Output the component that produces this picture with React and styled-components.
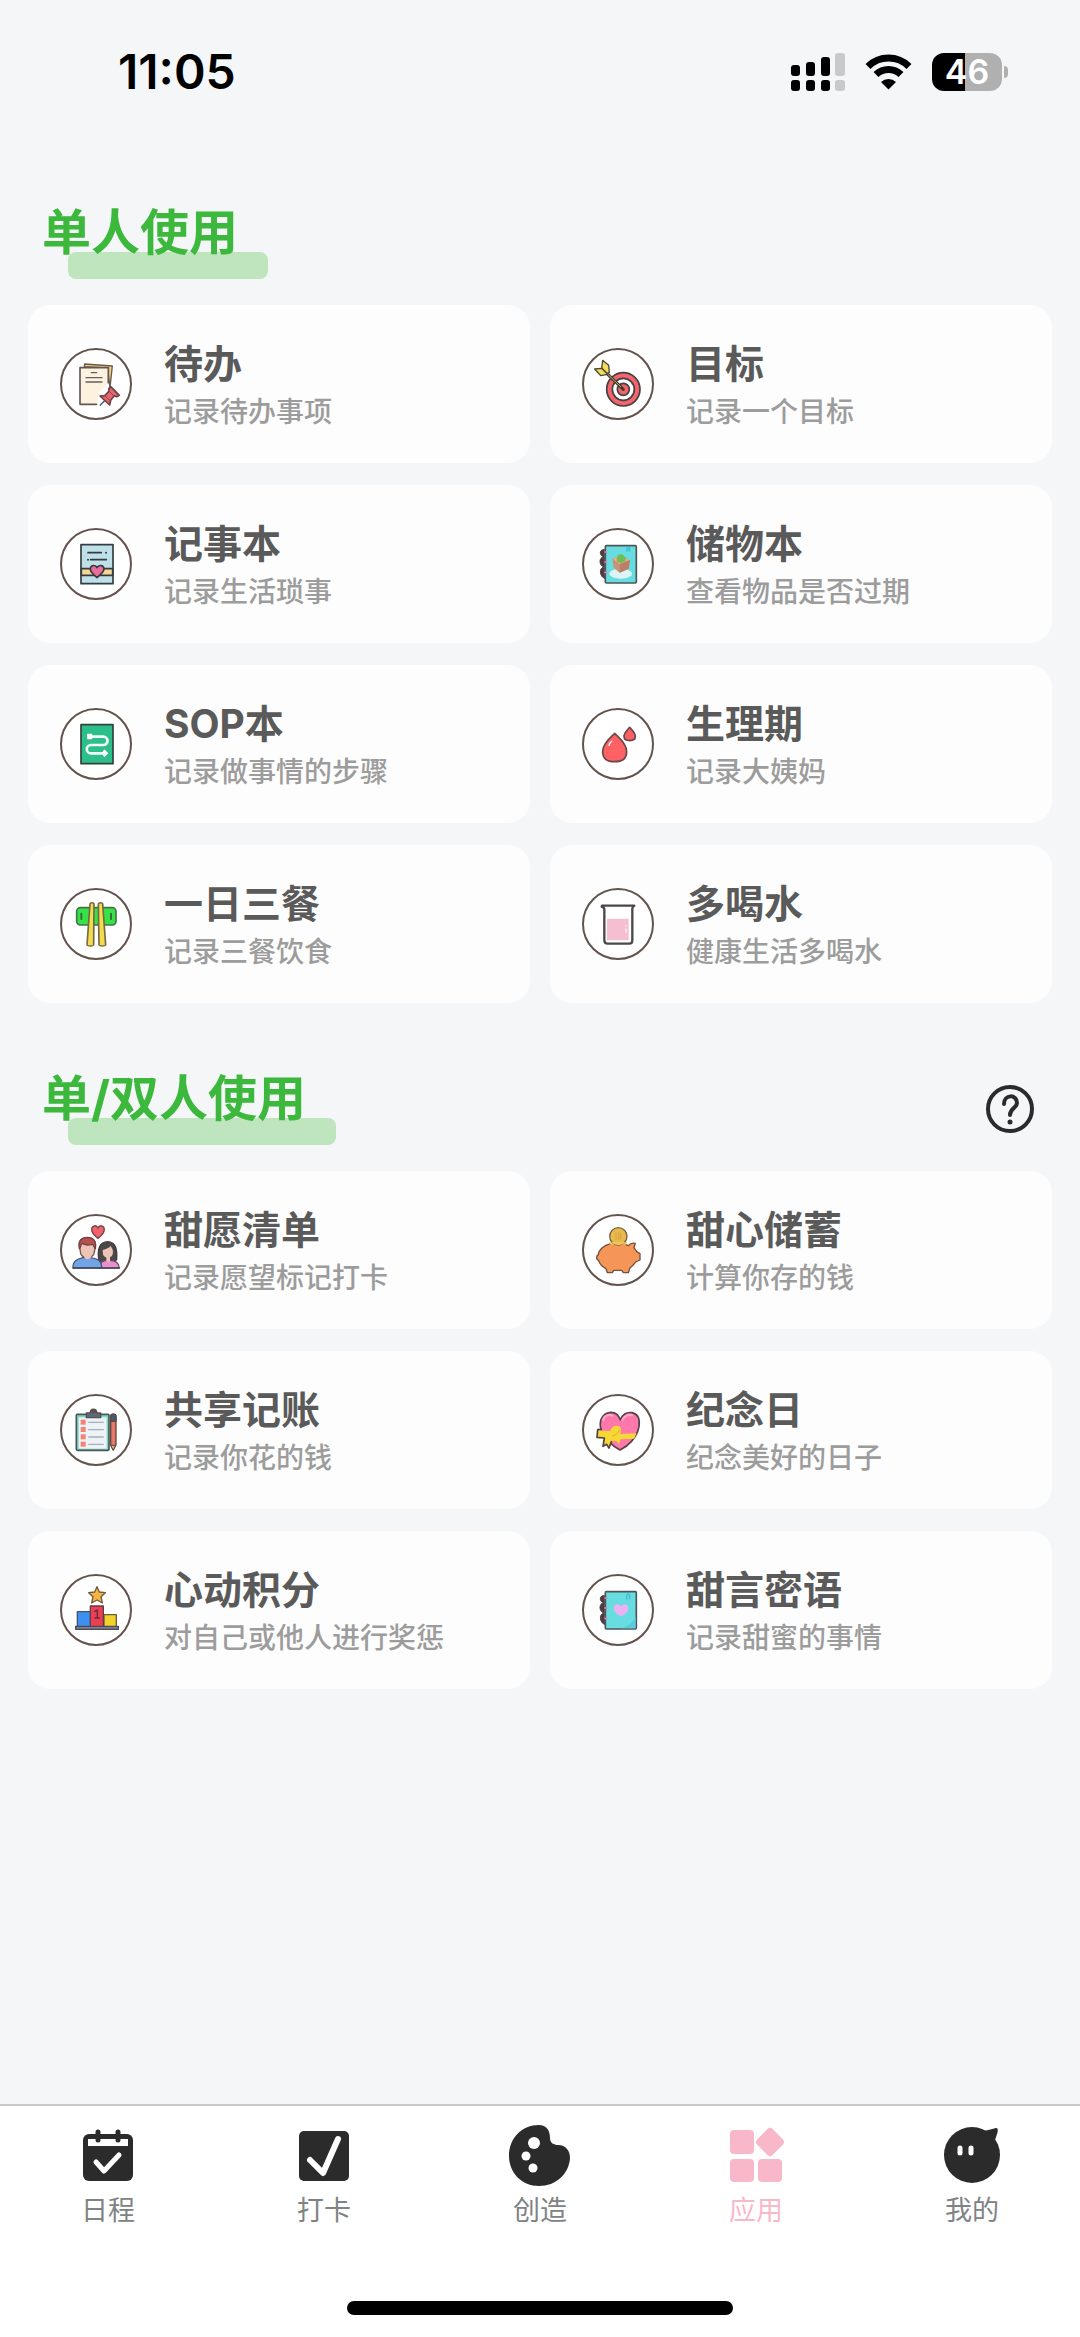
import React from "react";
import styled, { createGlobalStyle } from "styled-components";

const GlobalStyle = createGlobalStyle`
  * { box-sizing: border-box; }
  body {
    margin: 0;
    background: #f4f6f8;
    font-family: Inter, "Noto Sans CJK SC", sans-serif;
  }
`;

const Page = styled.div`
  display: flex;
  flex-direction: column;
  min-height: 100vh;
`;

const StatusBar = styled.header`
  display: flex;
  align-items: center;
  justify-content: space-between;
  height: 144px;
  padding: 0 72px 0 118px;
`;

const Clock = styled.time`
  font-size: 48px;
  font-weight: 600;
  line-height: 56px;
  color: #000;
`;

const StatusIcons = styled.div`
  display: flex;
  align-items: center;
  gap: 20px;
`;

const BatteryWrap = styled.div`
  display: flex;
  align-items: center;
  gap: 2px;
`;

const BatteryBody = styled.div`
  width: 70px;
  height: 38px;
  border-radius: 12px;
  background: linear-gradient(to right, #000 47%, #b0b0b1 47%);
  color: #fff;
  font-size: 34px;
  font-weight: 600;
  line-height: 38px;
  text-align: center;
`;

const BatteryNub = styled.div`
  width: 4px;
  height: 12px;
  border-radius: 0 6px 6px 0;
  background: #b0b0b1;
`;

const Main = styled.main`
  flex: 1;
  display: flex;
  flex-direction: column;
  gap: 66px;
  padding: 59px 28px;
`;

const SectionHeader = styled.div`
  display: flex;
  align-items: center;
  justify-content: space-between;
  height: 80px;
  margin-bottom: 22px;
  padding: 0 18px 0 14px;
`;

const SectionTitle = styled.h2`
  position: relative;
  isolation: isolate;
  align-self: flex-start;
  margin: 0;
  font-size: 49px;
  font-weight: 700;
  line-height: 60px;
  color: #3cb93c;

  &::after {
    content: "";
    position: absolute;
    z-index: -1;
    left: 26px;
    right: -30px;
    top: 49px;
    height: 27px;
    border-radius: 8px;
    background: #bee5be;
  }
`;

const HelpButton = styled.button`
  display: flex;
  padding: 0;
  border: 0;
  background: none;
  cursor: pointer;
`;

const CardGrid = styled.div`
  display: grid;
  grid-template-columns: 1fr 1fr;
  gap: 22px 20px;
`;

const Card = styled.a`
  display: flex;
  align-items: center;
  gap: 32px;
  height: 158px;
  padding: 0 32px;
  border-radius: 22px;
  background: #fdfdfd;
  text-decoration: none;
`;

const IconRing = styled.span`
  display: flex;
  flex: none;
  width: 72px;
  height: 72px;
  border: 2px solid #62534d;
  border-radius: 50%;
  background: #fff;
`;

const CardArt = styled.svg`
  flex: none;
  width: 72px;
  height: 72px;
  margin: -2px;
  stroke-linejoin: round;
  stroke-linecap: round;
`;

const CardText = styled.span`
  display: flex;
  flex-direction: column;
`;

const CardTitle = styled.strong`
  font-size: 39px;
  font-weight: 700;
  line-height: 56px;
  color: #5a5a5a;
`;

const CardNote = styled.span`
  font-size: 28px;
  font-weight: 500;
  line-height: 40px;
  color: #9c9c9c;
`;

const TabBar = styled.nav`
  padding: 18px 0 22px;
  border-top: 2px solid #c6c8c9;
  background: #fff;
`;

const TabList = styled.div`
  display: grid;
  grid-template-columns: repeat(5, 1fr);
`;

const Tab = styled.a`
  display: flex;
  flex-direction: column;
  align-items: center;
  font-size: 27px;
  line-height: 46px;
  text-decoration: none;
  color: ${(p) => (p.$active ? "#f9b8c9" : "#808384")};
`;

const HomeIndicator = styled.div`
  width: 386px;
  max-width: 60%;
  height: 14px;
  margin: 67px auto 0;
  border-radius: 7px;
  background: #000;
`;

const TodoArt = () => (
  <>
    <path d="M74 48 157 54 150 118 142 60 73 56Z" fill="#f3cf7e" stroke="#6a5a4c" strokeWidth="4" />
    <path d="M110 169H60V59H145V104L118 134Z" fill="#fdf1df" />
    <path d="M110 169H60V59H145V104" fill="none" stroke="#5f5857" strokeWidth="5" />
    <path d="M94 74H110M78 89H126M78 102H126" stroke="#66605f" strokeWidth="4" />
    <path d="M133 159 121 171" stroke="#5a5f7c" strokeWidth="5" />
    <path d="M152 116 178 142 170 146 163 143 152 157 149 171 120 144 134 143 146 131 147 121Z" fill="#e5666b" stroke="#6b4347" strokeWidth="5" />
    <path d="M134 143 150 158M148 130 162 144" stroke="#9c444c" strokeWidth="3" />
  </>
);

const TargetArt = () => (
  <>
    <circle cx="124" cy="124" r="50" fill="#f2656b" stroke="#454044" strokeWidth="5" />
    <circle cx="124" cy="124" r="33" fill="#fff" stroke="#454044" strokeWidth="5" />
    <circle cx="124" cy="124" r="18" fill="#f2656b" stroke="#454044" strokeWidth="5" />
    <path d="M62 64 124 124" stroke="#3f3b34" strokeWidth="9" />
    <path d="M70 72 116 116" stroke="#c9ab50" strokeWidth="3" />
    <path d="M59 61 62 37 80 52 82 74 74 76Z" fill="#f5dc57" stroke="#4a4638" strokeWidth="4" />
    <path d="M59 61 38 63 56 83 76 79 74 76Z" fill="#f5dc57" stroke="#4a4638" strokeWidth="4" />
  </>
);

const NotesArt = () => (
  <>
    <rect x="63" y="50" width="96" height="117" fill="#bfe0e8" stroke="#333c40" strokeWidth="5" />
    <rect x="64" y="122" width="94" height="20" fill="#f7d795" stroke="#333c40" strokeWidth="5" />
    <path d="M84 74H124M92 95H139" stroke="#333c40" strokeWidth="5" />
    <circle cx="138" cy="74" r="3" fill="#333c40" />
    <circle cx="84" cy="95" r="3" fill="#333c40" />
    <path d="M111 149C96 137 90 130 91 122C93 110 107 110 111 119C115 110 130 110 132 122C133 130 126 137 111 149Z" fill="#ea6c9b" stroke="#333c40" strokeWidth="5" />
  </>
);

const NotebookShell = ({ children }) => (
  <>
    <path d="M67 65C52 62 50 84 66 86C50 88 50 112 66 117C50 120 52 146 69 152Z" fill="#4d3d40" stroke="#4d3d40" strokeWidth="3" />
    <rect x="70" y="53" width="93" height="112" rx="3" fill="#67dde1" stroke="#4d5557" strokeWidth="5" />
    <path d="M69 72H75M69 102H75M69 133H75" stroke="#e783bd" strokeWidth="5" />
    {children}
  </>
);

const StorageArt = () => (
  <NotebookShell>
    <ellipse cx="116" cy="137" rx="34" ry="15" fill="#dcf4f5" />
    <path d="M91 92 113 84 144 96 140 122 113 134 95 119Z" fill="#c99277" />
    <path d="M91 92 114 108 144 96 113 84Z" fill="#e3ae8e" />
    <path d="M114 108 113 134 140 122 144 96Z" fill="#b98067" />
    <path d="M104 92 108 80 120 78 132 90 129 101 115 105 106 101Z" fill="#6fbd54" />
    <path d="M133 56H145V73L139 68 133 73Z" fill="#43c4d7" />
  </NotebookShell>
);

const WhisperArt = () => (
  <NotebookShell>
    <path d="M118 163C138 157 152 145 161 129V163Z" fill="#58cbdc" />
    <path d="M134 75V65C136 58 143 58 143 66V75" fill="none" stroke="#43bdd0" strokeWidth="4" />
    <path d="M117 126C101 120 94 110 95 100C97 90 111 89 117 97C124 89 138 90 139 101C139 113 130 121 117 126Z" fill="#eeb1f0" />
  </NotebookShell>
);

const RouteArt = () => (
  <>
    <rect x="63" y="50" width="96" height="117" fill="#2cbf8c" stroke="#34403d" strokeWidth="5" />
    <path d="M90 86H130A12 12 0 0 1 130 111H93A12 12 0 0 0 93 136H132" fill="none" stroke="#f1fbf7" strokeWidth="8" />
    <rect x="81" y="77" width="16" height="17" rx="3" fill="#fff" />
    <path d="M133 124 145 136 133 148 125 136Z" fill="#fff" />
  </>
);

const DropsArt = () => (
  <>
    <path d="M98 76C89 86 62 105 62 131C62 151 76 161 98 161C120 161 134 151 134 131C134 105 107 86 98 76Z" fill="#ff6165" stroke="#674a47" strokeWidth="5" />
    <path d="M143 58C138 65 126 74 126 85C126 94 134 98 143 98C153 98 160 93 160 85C160 74 148 65 143 58Z" fill="#ff5f64" stroke="#674a47" strokeWidth="5" />
    <path d="M81 112C82 107 85 103 89 100" fill="none" stroke="#fff" strokeWidth="4" />
  </>
);

const MealArt = () => (
  <>
    <rect x="50" y="59" width="118" height="52" rx="11" fill="#35e349" stroke="#47714a" strokeWidth="5" />
    <path d="M64 77V93M153 77V93" stroke="#386b3d" strokeWidth="6" />
    <path d="M90 48C91 43 101 43 102 48L101 171C99 175 83 175 81 171Z" fill="#f2dc4c" stroke="#736b48" strokeWidth="5" />
    <path d="M115 48C116 43 127 43 128 48L137 171C135 175 119 175 117 171Z" fill="#f2dc4c" stroke="#736b48" strokeWidth="5" />
  </>
);

const WaterArt = () => (
  <>
    <rect x="75" y="92" width="65" height="65" rx="2" fill="#f5bfd1" />
    <path d="M59 56C63 57 67 60 67 65V157C67 164 71 167 77 167H142C148 167 151 164 151 157V62C151 57 153 55 157 53H60Z" fill="none" stroke="#4c474b" strokeWidth="7" />
    <path d="M132 112V114M132 123V134" stroke="#fff" strokeWidth="3" />
  </>
);

const CoupleArt = () => (
  <>
    <path d="M114 73C101 64 95 55 95 46C96 33 110 32 114 42C118 32 132 33 133 46C133 55 127 64 114 73Z" fill="#f0636a" stroke="#744448" strokeWidth="4" />
    <path d="M116 136C112 104 119 84 143 83C166 84 172 104 170 136L163 145H121Z" fill="#4b4849" stroke="#3f3b3c" strokeWidth="4" />
    <path d="M118 162C117 146 128 139 144 139C164 138 177 145 178 162Z" fill="#ea8fce" stroke="#674d60" strokeWidth="4" />
    <path d="M128 108C139 106 148 101 152 96C159 106 160 111 158 121C155 135 132 135 129 121Z" fill="#edc4b6" />
    <path d="M139 128H150V143H139Z" fill="#edc4b6" />
    <path d="M39 162C38 139 53 135 69 131L92 131C113 135 126 140 125 162Z" fill="#70a4e6" stroke="#4c5673" strokeWidth="4" />
    <path d="M58 92C56 78 67 71 82 71C98 71 108 80 106 98L102 119C96 134 68 134 62 119Z" fill="#edc4b6" stroke="#735451" strokeWidth="4" />
    <path d="M58 104C54 81 64 70 82 70C100 70 110 82 106 104C101 99 102 93 97 91C84 94 72 93 66 88C63 91 62 99 58 104Z" fill="#b75252" stroke="#754143" strokeWidth="4" />
    <path d="M72 128C76 138 89 138 94 128L94 118H72Z" fill="#edc4b6" />
    <path d="M40 162H178" stroke="#45495e" strokeWidth="5" />
  </>
);

const PiggyArt = () => (
  <>
    <path d="M86 89C64 94 49 109 49 122C41 127 43 137 50 140C54 152 65 160 72 164L76 176H91L95 169H119L124 176H139L144 162C154 155 158 148 161 144L174 138V119L164 113C161 108 158 105 156 101L160 88C149 86 143 90 139 95C130 90 119 87 112 88Z" fill="#f59558" stroke="#70523e" strokeWidth="4" />
    <path d="M88 87H130" stroke="#efd15b" strokeWidth="10" />
    <circle cx="109" cy="67" r="26" fill="#e7b94e" stroke="#786142" strokeWidth="4" />
    <path d="M88 84C94 96 124 96 130 84" fill="#ecc75c" />
    <path d="M102 57V76M110 55V77M116 58V76" stroke="#d7a23e" strokeWidth="3" />
  </>
);

const LedgerArt = () => (
  <>
    <rect x="49" y="61" width="98" height="108" rx="3" fill="#7bd7c6" stroke="#4c5755" strokeWidth="5" />
    <rect x="56" y="70" width="84" height="94" fill="#edf2f7" />
    <path d="M79 71V57H90C92 42 109 42 111 57H122V71Z" fill="#596a7d" stroke="#594f4c" strokeWidth="4" />
    <path d="M91 57C93 44 108 44 110 57Z" fill="#654f45" />
    {[77, 99, 121, 143].map((y) => (
      <g key={y}>
        <rect x="62" y={y} width="15" height="15" fill="#f58275" />
        <path d={`M86 ${y + 8}H130`} stroke="#a9b0b9" strokeWidth="4" />
      </g>
    ))}
    <path d="M152 68C152 58 168 58 168 68V152L160 168 152 152Z" fill="#e97765" stroke="#594a46" strokeWidth="4" />
    <path d="M152 82V68C152 58 168 58 168 68V82Z" fill="#4d596a" stroke="#594a46" strokeWidth="4" />
    <path d="M153 154H167L160 168Z" fill="#e0b377" stroke="#594a46" strokeWidth="3" />
  </>
);

const GiftHeartArt = () => (
  <>
    <path d="M114 168C96 159 64 133 56 103C50 73 67 56 87 55C101 55 110 63 115 78C120 62 134 53 150 56C168 60 174 76 171 97C165 132 138 157 114 168Z" fill="#ff78ab" stroke="#554247" strokeWidth="5" />
    <path d="M63 78C65 65 79 60 91 65M121 77C127 66 139 60 150 64" fill="none" stroke="#ffaacb" strokeWidth="6" />
    <path d="M47 109 84 111C88 98 101 92 111 97C118 101 118 111 115 120L163 118 157 134 116 136 111 151 103 141 88 142 82 162 74 153 63 158 67 133H46Z" fill="#f6d736" />
    <path d="M57 106 47 107 45 130 67 132 63 157 74 151 81 162 88 143" fill="none" stroke="#554247" strokeWidth="5" />
    <path d="M92 126C102 124 108 117 112 108" fill="none" stroke="#e0b01c" strokeWidth="3" />
  </>
);

const PodiumArt = () => (
  <>
    <path d="M111 38 118 54 136 56 123 68 127 87 111 78 95 87 99 68 86 56 104 54Z" fill="#f5b543" stroke="#72583f" strokeWidth="4" />
    <rect x="52" y="113" width="40" height="45" fill="#3e8ff2" stroke="#46536c" strokeWidth="4" />
    <rect x="132" y="122" width="37" height="36" fill="#f3d22b" stroke="#655d41" strokeWidth="4" />
    <rect x="91" y="96" width="39" height="62" fill="#ed3f51" stroke="#613d48" strokeWidth="4" />
    <path d="M104 112 112 108V132M105 132H118" fill="none" stroke="#612e3b" strokeWidth="4" />
    <rect x="47" y="157" width="128" height="9" fill="#7c7f8d" stroke="#4c4b55" strokeWidth="4" />
  </>
);

const soloApps = [
  { title: "待办", note: "记录待办事项", Art: TodoArt },
  { title: "目标", note: "记录一个目标", Art: TargetArt },
  { title: "记事本", note: "记录生活琐事", Art: NotesArt },
  { title: "储物本", note: "查看物品是否过期", Art: StorageArt },
  { title: "SOP本", note: "记录做事情的步骤", Art: RouteArt },
  { title: "生理期", note: "记录大姨妈", Art: DropsArt },
  { title: "一日三餐", note: "记录三餐饮食", Art: MealArt },
  { title: "多喝水", note: "健康生活多喝水", Art: WaterArt },
];

const sharedApps = [
  { title: "甜愿清单", note: "记录愿望标记打卡", Art: CoupleArt },
  { title: "甜心储蓄", note: "计算你存的钱", Art: PiggyArt },
  { title: "共享记账", note: "记录你花的钱", Art: LedgerArt },
  { title: "纪念日", note: "纪念美好的日子", Art: GiftHeartArt },
  { title: "心动积分", note: "对自己或他人进行奖惩", Art: PodiumArt },
  { title: "甜言密语", note: "记录甜蜜的事情", Art: WhisperArt },
];

const tabs = [
  {
    label: "日程",
    art: (
      <>
        <rect x="7" y="10" width="50" height="47" rx="6" fill="#2b2b2b" />
        <path d="M12 15H52V22H12Z" fill="#fff" />
        <path d="M22 8V16M42 8V16" stroke="#2b2b2b" strokeWidth="5" />
        <path d="M20 38 28 47 43 31" fill="none" stroke="#fff" strokeWidth="5" />
      </>
    ),
  },
  {
    label: "打卡",
    art: (
      <>
        <rect x="7" y="7" width="50" height="50" rx="5" fill="#2b2b2b" />
        <path d="M18 36 31 49 46 15" fill="none" stroke="#fff" strokeWidth="6" />
      </>
    ),
  },
  {
    label: "创造",
    art: (
      <>
        <path d="M42 14C42 19 46 21 50 21C58 21 62 27 62 34C61 50 48 62 31 62C14 62 1 49 1 32C1 14 14 1 31 1C38 1 42 6 42 14Z" fill="#2b2b2b" />
        <circle cx="26" cy="19" r="6" fill="#fff" />
        <circle cx="18" cy="32" r="4.5" fill="#fff" />
        <circle cx="25" cy="44" r="4.5" fill="#fff" />
      </>
    ),
  },
  {
    label: "应用",
    active: true,
    art: (
      <g fill="#f9b8c9">
        <rect x="6" y="6" width="24" height="24" rx="4" />
        <rect x="6" y="35" width="24" height="23" rx="4" />
        <rect x="34" y="35" width="24" height="23" rx="4" />
        <rect x="35" y="7" width="22" height="22" rx="4" transform="rotate(45 46 18)" />
      </g>
    ),
  },
  {
    label: "我的",
    art: (
      <>
        <circle cx="32" cy="31" r="28" fill="#2b2b2b" />
        <path d="M40 7C46 7 51 5 56 4C59 4 58 8 55 16L50 18Z" fill="#2b2b2b" />
        <path d="M20 24V29M31 24V29" stroke="#fff" strokeWidth="5" />
      </>
    ),
  },
];

const CardList = ({ apps }) => (
  <CardGrid>
    {apps.map(({ title, note, Art }) => (
      <Card href="#" key={title}>
        <IconRing>
          <CardArt viewBox="0 0 216 216" aria-hidden="true">
            <Art />
          </CardArt>
        </IconRing>
        <CardText>
          <CardTitle>{title}</CardTitle>
          <CardNote>{note}</CardNote>
        </CardText>
      </Card>
    ))}
  </CardGrid>
);

export default function App() {
  return (
    <Page>
      <GlobalStyle />
      <StatusBar>
        <Clock>11:05</Clock>
        <StatusIcons>
          <svg width="54" height="38" viewBox="0 0 54 38" aria-hidden="true">
            <rect x="0" y="12" width="9" height="11" rx="3" />
            <rect x="15" y="9" width="9" height="14" rx="3" />
            <rect x="30" y="4" width="9" height="19" rx="3" />
            <rect x="44" y="0" width="10" height="23" rx="3" fill="#c8c9ca" />
            <rect x="0" y="27" width="9" height="11" rx="3" />
            <rect x="15" y="27" width="9" height="11" rx="3" />
            <rect x="30" y="27" width="9" height="11" rx="3" />
            <rect x="44" y="27" width="10" height="11" rx="3" fill="#c8c9ca" />
          </svg>
          <svg width="47" height="36" viewBox="0 0 47 36" aria-hidden="true">
            <path d="M3 12.5A29 29 0 0 1 44 12.5" fill="none" stroke="#000" strokeWidth="7" />
            <path d="M11 20.5A18 18 0 0 1 36 20.5" fill="none" stroke="#000" strokeWidth="7" />
            <path d="M23.5 35.5 16 28A11 11 0 0 1 31 28Z" />
          </svg>
          <BatteryWrap>
            <BatteryBody>46</BatteryBody>
            <BatteryNub />
          </BatteryWrap>
        </StatusIcons>
      </StatusBar>

      <Main>
        <section>
          <SectionHeader>
            <SectionTitle>单人使用</SectionTitle>
          </SectionHeader>
          <CardList apps={soloApps} />
        </section>
        <section>
          <SectionHeader>
            <SectionTitle>单/双人使用</SectionTitle>
            <HelpButton type="button" aria-label="帮助">
              <svg width="48" height="48" viewBox="0 0 48 48" fill="none" stroke="#2b2b2b" strokeLinecap="round" aria-hidden="true">
                <circle cx="24" cy="24" r="22" strokeWidth="4" />
                <path d="M18 19C18 9 31 9 31 18C31 23 24 23 24 30" strokeWidth="4" />
                <circle cx="24" cy="37" r="2.5" fill="#2b2b2b" stroke="none" />
              </svg>
            </HelpButton>
          </SectionHeader>
          <CardList apps={sharedApps} />
        </section>
      </Main>

      <TabBar>
        <TabList>
          {tabs.map(({ label, art, active }) => (
            <Tab href="#" key={label} $active={active} aria-current={active ? "page" : undefined}>
              <svg width="64" height="64" viewBox="0 0 64 64" strokeLinecap="round" strokeLinejoin="round" aria-hidden="true">
                {art}
              </svg>
              {label}
            </Tab>
          ))}
        </TabList>
        <HomeIndicator />
      </TabBar>
    </Page>
  );
}
